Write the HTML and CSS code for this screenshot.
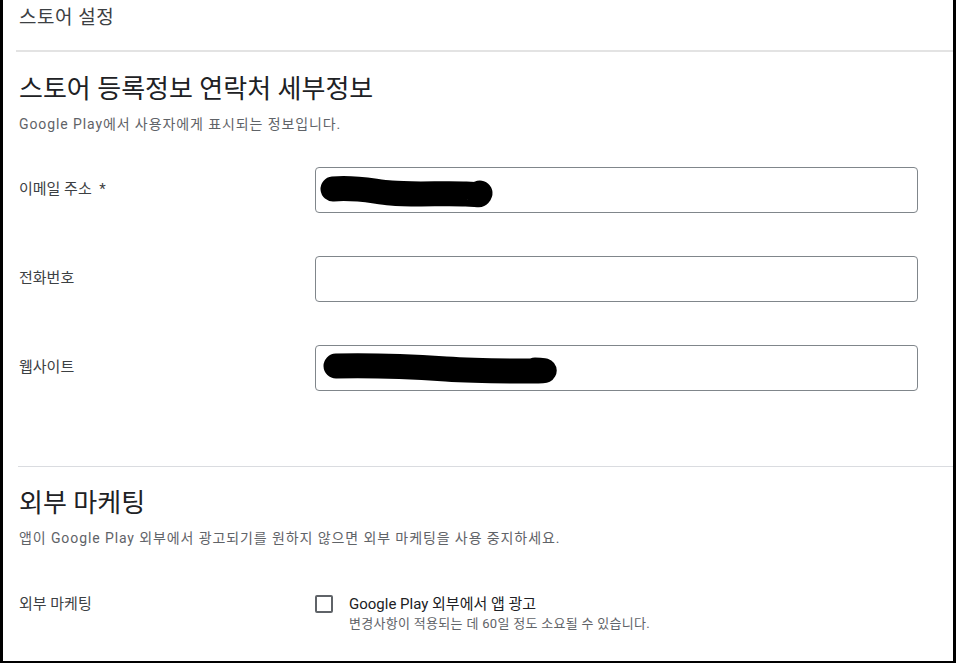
FILE: index.html
```html
<!DOCTYPE html>
<html lang="ko">
<head>
    <meta charset="UTF-8">
    <meta name="viewport" content="width=device-width, initial-scale=1.0">
    <link rel="stylesheet" href="styles.css">
    <title>스토어 설정</title>
</head>
<body>
    <div class="frame">
        <!-- 상단 제목 -->
        <header class="topbar">스토어 설정</header>

        <!-- 연락처 세부정보 -->
        <section class="section">
            <h2>스토어 등록정보 연락처 세부정보</h2>
            <p class="desc">Google Play에서 사용자에게 표시되는 정보입니다.</p>

            <div class="row">
                <label class="label">이메일 주소 &nbsp;*</label>
                <div class="field">
                    <svg class="redact" width="602" height="44" viewBox="0 0 602 44">
                        <path d="M17 21 C40 19 55 23 75 25 S130 25 150 26 S160 27 164 25" fill="none" stroke="#000" stroke-width="25" stroke-linecap="round"/>
                    </svg>
                </div>
            </div>

            <div class="row">
                <label class="label">전화번호</label>
                <div class="field"></div>
            </div>

            <div class="row">
                <label class="label">웹사이트</label>
                <div class="field">
                    <svg class="redact" width="602" height="44" viewBox="0 0 602 44">
                        <path d="M20 20 C60 19 100 21 130 23 S190 25 215 25 S222 24 219 24" fill="none" stroke="#000" stroke-width="25" stroke-linecap="round"/>
                    </svg>
                </div>
            </div>
        </section>

        <!-- 외부 마케팅 -->
        <section class="section bordered">
            <h2>외부 마케팅</h2>
            <p class="desc">앱이 Google Play 외부에서 광고되기를 원하지 않으면 외부 마케팅을 사용 중지하세요.</p>

            <div class="row check-row">
                <label class="label">외부 마케팅</label>
                <div class="check">
                    <span class="box"></span>
                    <div>
                        <div class="check-title">Google Play 외부에서 앱 광고</div>
                        <div class="check-hint">변경사항이 적용되는 데 60일 정도 소요될 수 있습니다.</div>
                    </div>
                </div>
            </div>
        </section>
    </div>
</body>
</html>
```

FILE: styles.css
```css
/* 스토어 설정 페이지 */
body {
    margin: 0;
    padding: 0;
    background: #fff;
    font-family: Roboto, "Noto Sans CJK KR", sans-serif;
    color: #202124;
}

.frame {
    box-sizing: border-box;
    width: 956px;
    height: 663px;
    border-left: 3px solid #000;
    border-right: 3px solid #000;
    border-bottom: 2px solid #000;
    overflow: hidden;
}

.topbar {
    height: 52px;
    margin-left: 13px;
    padding: 6px 0 0 3px;
    box-sizing: border-box;
    font-size: 19px;
    line-height: 24px;
    letter-spacing: 0.5px;
    color: #3c4043;
    border-bottom: 2px solid #e3e3e3;
}

.section {
    margin-left: 15px;
    padding: 0 0 0 1px;
}

.section.bordered {
    border-top: 1px solid #dadce0;
    margin-top: 75px;
}

h2 {
    margin: 0;
    padding-top: 21px;
    font-size: 26px;
    font-weight: 400;
    line-height: 32px;
    color: #202124;
}

.bordered h2 {
    padding-top: 20px;
}

.desc {
    margin: 9px 0 0;
    font-size: 14px;
    line-height: 20px;
    letter-spacing: 0.9px;
    color: #5f6368;
}

.row {
    display: flex;
    align-items: center;
    margin-top: 33px;
}

.row + .row {
    margin-top: 43px;
}

.label {
    width: 296px;
    flex: none;
    font-size: 15px;
    padding-bottom: 5px;
    color: #3c4043;
}

.field {
    position: relative;
    width: 603px;
    height: 46px;
    box-sizing: border-box;
    border: 1px solid #80868b;
    border-radius: 4px;
}

.redact {
    position: absolute;
    left: 0;
    top: 0;
}

.check-row {
    margin-top: 45px;
    align-items: flex-start;
}

.check-row .label {
    line-height: 20px;
    padding: 1px 0 0;
}

.check {
    display: flex;
    gap: 16px;
}

.box {
    width: 18px;
    height: 18px;
    box-sizing: border-box;
    border: 2px solid #5f6368;
    border-radius: 2px;
    margin-top: 2px;
    flex: none;
}

.check-title {
    font-size: 15px;
    line-height: 20px;
    padding-top: 1px;
    color: #202124;
}

.check-hint {
    font-size: 13px;
    line-height: 20px;
    letter-spacing: 0.3px;
    color: #5f6368;
}
```
